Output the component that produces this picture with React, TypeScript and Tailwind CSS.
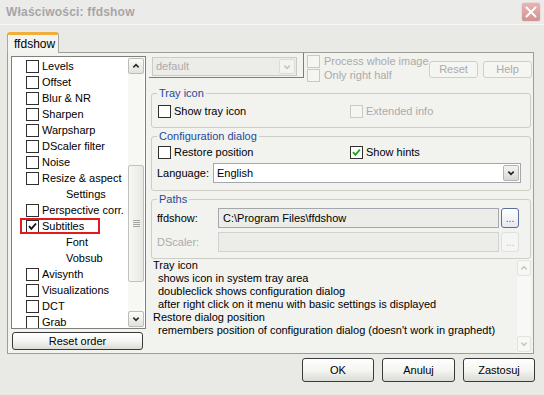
import React from "react";

const Chevron = ({ up, color = "#333", size = 9 }: { up?: boolean; color?: string; size?: number }) => (
  <svg width={size} height={size} viewBox="0 0 9 9">
    <polyline
      points={up ? "1.5,6 4.5,3 7.5,6" : "1.5,3 4.5,6 7.5,3"}
      fill="none"
      stroke={color}
      strokeWidth="1.8"
    />
  </svg>
);

const Box = ({ checked, disabled, green }: { checked?: boolean; disabled?: boolean; green?: boolean }) => (
  <span
    className={
      disabled
        ? "w-[13px] h-[13px] border border-[#cacac4] bg-[#f5f5f2] flex items-center justify-center shrink-0"
        : "w-[13px] h-[13px] border border-[#2f2f2f] bg-white flex items-center justify-center shrink-0"
    }
  >
    {checked && (
      <svg width="9" height="9" viewBox="0 0 9 9">
        <polyline points="1,4.2 3.4,6.8 8,1.5" fill="none" stroke={green ? "#21a121" : "#111"} strokeWidth="1.9" />
      </svg>
    )}
  </span>
);

const ArrowBtn = ({ up, disabled, h = 16, w = 16 }: { up?: boolean; disabled?: boolean; h?: number; w?: number }) => (
  <div
    className={
      disabled
        ? "flex items-center justify-center rounded-[2px] border border-[#e2e2de] bg-[#f7f7f5] shrink-0"
        : "flex items-center justify-center rounded-[2px] border border-[#bdbdb7] bg-gradient-to-b from-[#fbfbfa] to-[#e2e2dd] shrink-0"
    }
    style={{ width: w, height: h }}
  >
    <Chevron up={up} color={disabled ? "#c8c8c4" : "#2b2b2b"} size={8} />
  </div>
);

const listItems: { label: string; sub?: boolean; checked?: boolean; mark?: boolean }[] = [
  { label: "Levels" },
  { label: "Offset" },
  { label: "Blur & NR" },
  { label: "Sharpen" },
  { label: "Warpsharp" },
  { label: "DScaler filter" },
  { label: "Noise" },
  { label: "Resize & aspect" },
  { label: "Settings", sub: true },
  { label: "Perspective corr." },
  { label: "Subtitles", checked: true, mark: true },
  { label: "Font", sub: true },
  { label: "Vobsub", sub: true },
  { label: "Avisynth" },
  { label: "Visualizations" },
  { label: "DCT" },
  { label: "Grab" },
];

const Btn = ({ children, w, h, disabled }: { children: React.ReactNode; w: number; h: number; disabled?: boolean }) => (
  <div
    className={
      disabled
        ? "flex items-center justify-center rounded-[3px] border border-[#cfcfca] bg-[#f5f5f2] text-[#ababab] shrink-0"
        : "flex items-center justify-center rounded-[3px] border border-[#3a3a3a] bg-gradient-to-b from-[#ffffff] via-[#f5f5f2] to-[#dcdcd6] text-black shrink-0"
    }
    style={{ width: w, height: h }}
  >
    {children}
  </div>
);

export default function App() {
  return (
    <div
      className="w-[544px] h-[395px] bg-[#e9e9e6] flex flex-col overflow-hidden text-[11px] leading-[13px] text-black"
      style={{ fontFamily: '"Liberation Sans", Arial, sans-serif' }}
    >
      {/* Title bar */}
      <div className="h-[25px] flex items-center justify-between pl-[6px] pr-[3px] border-b border-[#f7f7f5] bg-[#ebebea]">
        <span className="text-[12px] font-bold text-[#a6a6a6] tracking-[0.2px]">Właściwości: ffdshow</span>
        <div className="w-[20px] h-[20px] rounded-[3px] border border-[#f1dada] bg-gradient-to-b from-[#e6b6b3] to-[#cf9391] flex items-center justify-center">
          <svg width="12" height="12" viewBox="0 0 12 12">
            <path d="M1.5 1.5 L10.5 10.5 M10.5 1.5 L1.5 10.5" stroke="#ffffff" strokeWidth="2" strokeLinecap="round" />
          </svg>
        </div>
      </div>

      {/* Tabs */}
      <div className="pt-[7px] pl-[7px] flex flex-col">
        <div className="flex">
          <div className="relative z-10 w-[52px] h-[21px] -mb-px bg-[#f3f3f0] border-t-[3px] border-t-[#f1ae3c] border-l border-r border-[#a8a8a3] rounded-t-[3px] flex items-center pl-[6px]">
            <span className="text-[12px]">ffdshow</span>
          </div>
        </div>
        <div className="w-[527px] h-[302px] border border-[#9d9d98] bg-[#f2f2ef] flex">
          {/* Left column */}
          <div className="ml-[3px] mt-[3px] w-[135px] flex flex-col">
            <div className="h-[273px] border border-[#7f7f7b] bg-white flex overflow-hidden">
              <div className="flex-1 flex flex-col pt-[1px]">
                {listItems.map((it) => (
                  <div key={it.label} className="relative h-[16px] shrink-0 flex items-center">
                    {it.sub ? (
                      <span className="pl-[54px]">{it.label}</span>
                    ) : (
                      <div className="pl-[14px] flex items-center gap-[3px]">
                        <Box checked={it.checked} />
                        <span>{it.label}</span>
                      </div>
                    )}
                    {it.mark && (
                      <span className="absolute left-[8px] top-0 w-[80px] h-[16px] border-2 border-[#e01b1b]" />
                    )}
                  </div>
                ))}
              </div>
              <div className="w-[16px] mr-[1px] flex flex-col bg-[#f7f7f4] py-[1px]">
                <ArrowBtn up />
                <div className="flex-1 relative">
                  <div className="mt-[91px] h-[117px] rounded-[2px] border border-[#c2c2bc] bg-gradient-to-r from-[#f7f7f5] to-[#e8e8e4] flex items-center justify-center">
                    <div className="flex flex-col gap-[1px]">
                      <div className="w-[7px] h-px bg-[#a6a6a0]" />
                      <div className="w-[7px] h-px bg-[#a6a6a0]" />
                      <div className="w-[7px] h-px bg-[#a6a6a0]" />
                      <div className="w-[7px] h-px bg-[#a6a6a0]" />
                    </div>
                  </div>
                </div>
                <ArrowBtn />
              </div>
            </div>
            <div className="mt-[3px] ml-[1px]">
              <Btn w={131} h={18}>
                Reset order
              </Btn>
            </div>
          </div>

          {/* Right column */}
          <div className="ml-[3px] w-[384px] flex flex-col">
            {/* top row */}
            <div className="h-[29px] flex">
              <div className="w-[155px] h-[25px] border-r border-b border-[#7c7c78] pl-[3px] pt-[4px]">
                <div className="w-[145px] h-[19px] border border-[#cbcbc5] bg-[#ecece8] flex items-center justify-between pl-[3px] pr-[1px]">
                  <span className="text-[#ababab]">default</span>
                  <div className="w-[16px] h-[15px] rounded-[2px] border border-[#dcdcd7] bg-[#f3f3f0] flex items-center justify-center">
                    <Chevron color="#c4c4c0" size={8} />
                  </div>
                </div>
              </div>
              <div className="ml-[3px] pt-[2px] flex flex-col text-[#ababab]">
                <div className="h-[15px] flex items-center gap-[4px]">
                  <Box disabled />
                  <span>Process whole image</span>
                </div>
                <div className="h-[15px] flex items-center gap-[4px]">
                  <Box disabled />
                  <span>Only right half</span>
                </div>
              </div>
              <div className="ml-auto mr-[1px] mt-[8px] flex gap-[5px]">
                <Btn w={49} h={17} disabled>
                  Reset
                </Btn>
                <Btn w={49} h={17} disabled>
                  Help
                </Btn>
              </div>
            </div>

            {/* Tray icon */}
            <fieldset className="ml-[2px] mt-[5px] w-[380px] h-[41px] border border-[#cdcdc6] rounded-[3px] shrink-0">
              <legend className="ml-[5px] px-[2px] text-[#244a9c] leading-[13px]">Tray icon</legend>
              <div className="mt-[3px] h-[16px] pl-[6px] flex items-center">
                <div className="w-[192px] flex items-center gap-[3px]">
                  <Box />
                  <span>Show tray icon</span>
                </div>
                <div className="flex items-center gap-[3px] text-[#ababab]">
                  <Box disabled />
                  <span>Extended info</span>
                </div>
              </div>
            </fieldset>

            {/* Configuration dialog */}
            <fieldset className="ml-[2px] mt-[2px] w-[380px] h-[61px] border border-[#cdcdc6] rounded-[3px] shrink-0">
              <legend className="ml-[5px] px-[2px] text-[#244a9c] leading-[13px]">Configuration dialog</legend>
              <div className="mt-[1px] h-[16px] pl-[6px] flex items-center">
                <div className="w-[192px] flex items-center gap-[3px]">
                  <Box />
                  <span>Restore position</span>
                </div>
                <div className="flex items-center gap-[3px]">
                  <Box checked green />
                  <span>Show hints</span>
                </div>
              </div>
              <div className="mt-[3px] pl-[5px] flex items-center">
                <span className="w-[56px]">Language:</span>
                <div className="w-[308px] h-[20px] border border-[#a3a8ad] bg-white flex items-center justify-between pl-[3px] pr-[1px]">
                  <span>English</span>
                  <div className="w-[16px] h-[16px] rounded-[2px] border border-[#b4b4ae] bg-gradient-to-b from-[#f4f4f2] to-[#d9d9d4] flex items-center justify-center">
                    <Chevron color="#222" size={8} />
                  </div>
                </div>
              </div>
            </fieldset>

            {/* Paths */}
            <fieldset className="ml-[2px] mt-[2px] w-[380px] h-[66px] border border-[#cdcdc6] rounded-[3px] shrink-0">
              <legend className="ml-[5px] px-[2px] text-[#244a9c] leading-[13px]">Paths</legend>
              <div className="mt-[2px] pl-[5px] flex items-center">
                <span className="w-[61px]">ffdshow:</span>
                <div className="w-[281px] h-[20px] border border-[#a3a8ad] bg-[#ececE8] flex items-center pl-[4px]">
                  C:\Program Files\ffdshow
                </div>
                <div className="ml-[2px] w-[18px] h-[20px] rounded-[3px] border border-[#5a6e9e] bg-gradient-to-b from-[#ffffff] to-[#e6e8ee] flex items-end justify-center pb-[4px] text-[#3a55a0] text-[10px] leading-[8px]">
                  ...
                </div>
              </div>
              <div className="mt-[4px] pl-[5px] flex items-center">
                <span className="w-[61px] text-[#ababab]">DScaler:</span>
                <div className="w-[281px] h-[20px] border border-[#cfd2d4] bg-[#ececE8]" />
                <div className="ml-[2px] w-[18px] h-[20px] rounded-[3px] border border-[#dedfe0] bg-[#f5f5f3] flex items-end justify-center pb-[4px] text-[#c0c0c0] text-[10px] leading-[8px]">
                  ...
                </div>
              </div>
            </fieldset>

            {/* Help text */}
            <div className="ml-[2px] w-[380px] h-[94px] flex">
              <div className="flex-1 pl-[2px] flex flex-col">
                <span>Tray icon</span>
                <span className="pl-[5px]">shows icon in system tray area</span>
                <span className="pl-[5px]">doubleclick shows configuration dialog</span>
                <span className="pl-[5px]">after right click on it menu with basic settings is displayed</span>
                <span>Restore dialog position</span>
                <span className="pl-[5px]">remembers position of configuration dialog (doesn't work in graphedt)</span>
              </div>
              <div className="w-[14px] flex flex-col bg-[#f8f8f6] py-[1px]">
                <ArrowBtn up disabled w={14} h={16} />
                <div className="flex-1" />
                <ArrowBtn disabled w={14} h={16} />
              </div>
            </div>
          </div>
        </div>
      </div>

      {/* Bottom buttons */}
      <div className="mt-[4px] pr-[9px] flex justify-end gap-[8px]">
        <Btn w={72} h={24}>
          OK
        </Btn>
        <Btn w={73} h={24}>
          Anuluj
        </Btn>
        <Btn w={72} h={24}>
          Zastosuj
        </Btn>
      </div>
    </div>
  );
}
